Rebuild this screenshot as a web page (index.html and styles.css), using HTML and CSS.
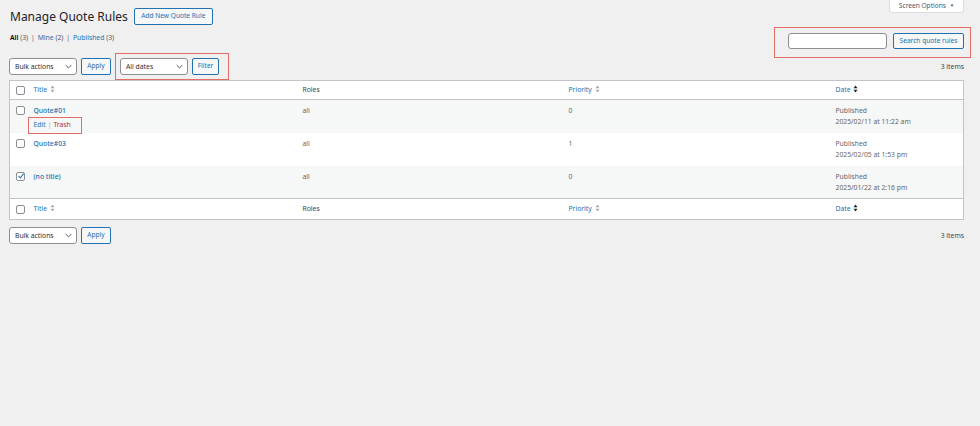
FILE: index.html
```html
<!DOCTYPE html>
<html lang="en">
<head>
<meta charset="utf-8">
<title>Manage Quote Rules</title>
<link rel="stylesheet" href="styles.css">
</head>
<body>
<div class="wrap">
  <div class="page-head">
    <div class="title-group">
      <h1 class="page-title">Manage Quote Rules</h1>
      <a class="btn btn-outline" href="#">Add New Quote Rule</a>
    </div>
    <button class="screen-options" type="button">Screen Options <span class="caret">&#9660;</span></button>
  </div>

  <div class="subnav">
    <ul class="subsubsub">
      <li><a class="current" href="#">All <span class="count">(3)</span></a> |</li>
      <li><a href="#">Mine <span class="count">(2)</span></a> |</li>
      <li><a href="#">Published <span class="count">(3)</span></a></li>
    </ul>
    <div class="search-box annotated">
      <input class="search-input" type="search" aria-label="Search">
      <button class="btn" type="button">Search quote rules</button>
    </div>
  </div>

  <div class="tablenav">
    <div class="select">Bulk actions <svg class="chev" viewBox="0 0 10 6"><path d="M1 1l4 4 4-4" fill="none" stroke="#50575e" stroke-width="1.4"/></svg></div>
    <button class="btn" type="button">Apply</button>
    <div class="filters annotated">
      <div class="select select-dates">All dates <svg class="chev" viewBox="0 0 10 6"><path d="M1 1l4 4 4-4" fill="none" stroke="#50575e" stroke-width="1.4"/></svg></div>
      <button class="btn" type="button">Filter</button>
    </div>
    <span class="items">3 items</span>
  </div>

  <table class="list">
    <colgroup>
      <col class="c-cb"><col class="c-title"><col class="c-roles"><col class="c-prio"><col>
    </colgroup>
    <thead>
      <tr class="head">
        <th class="cb"><span class="box"></span></th>
        <th><a href="#">Title</a> <svg class="sort" viewBox="0 0 6 10"><path d="M3 0.5L5.5 4H0.5z M3 9.5L5.5 6H0.5z" fill="#a7aaad"/></svg></th>
        <th class="plain">Roles</th>
        <th><a href="#">Priority</a> <svg class="sort" viewBox="0 0 6 10"><path d="M3 0.5L5.5 4H0.5z M3 9.5L5.5 6H0.5z" fill="#a7aaad"/></svg></th>
        <th><a href="#">Date</a> <svg class="sort" viewBox="0 0 6 10"><path d="M3 0.5L5.5 4H0.5z M3 9.5L5.5 6H0.5z" fill="#1d2327"/></svg></th>
      </tr>
    </thead>
    <tbody>
      <tr class="alt">
        <td class="cb"><span class="box"></span></td>
        <td><a class="row-title" href="#">Quote#01</a>
          <div class="row-actions annotated"><a href="#">Edit</a> <span class="sep">|</span> <a class="trash" href="#">Trash</a></div></td>
        <td>all</td>
        <td>0</td>
        <td>Published<br><span class="dt">2025/02/11 at 11:22 am</span></td>
      </tr>
      <tr>
        <td class="cb"><span class="box"></span></td>
        <td><a class="row-title" href="#">Quote#03</a></td>
        <td>all</td>
        <td>1</td>
        <td>Published<br><span class="dt">2025/02/05 at 1:53 pm</span></td>
      </tr>
      <tr class="alt">
        <td class="cb"><span class="box checked"><svg viewBox="0 0 10 10"><path d="M2 5.2l2.2 2.3L8.3 2" fill="none" stroke="#2271b1" stroke-width="1.4"/></svg></span></td>
        <td><a class="row-title" href="#">(no title)</a></td>
        <td>all</td>
        <td>0</td>
        <td>Published<br><span class="dt">2025/01/22 at 2:16 pm</span></td>
      </tr>
    </tbody>
    <tfoot>
      <tr class="foot">
        <th class="cb"><span class="box"></span></th>
        <th><a href="#">Title</a> <svg class="sort" viewBox="0 0 6 10"><path d="M3 0.5L5.5 4H0.5z M3 9.5L5.5 6H0.5z" fill="#a7aaad"/></svg></th>
        <th class="plain">Roles</th>
        <th><a href="#">Priority</a> <svg class="sort" viewBox="0 0 6 10"><path d="M3 0.5L5.5 4H0.5z M3 9.5L5.5 6H0.5z" fill="#a7aaad"/></svg></th>
        <th><a href="#">Date</a> <svg class="sort" viewBox="0 0 6 10"><path d="M3 0.5L5.5 4H0.5z M3 9.5L5.5 6H0.5z" fill="#1d2327"/></svg></th>
      </tr>
    </tfoot>
  </table>

  <div class="tablenav bottom">
    <div class="select">Bulk actions <svg class="chev" viewBox="0 0 10 6"><path d="M1 1l4 4 4-4" fill="none" stroke="#50575e" stroke-width="1.4"/></svg></div>
    <button class="btn" type="button">Apply</button>
    <span class="items">3 items</span>
  </div>
</div>
</body>
</html>
```
FILE: styles.css
```css
* { box-sizing: border-box; }
html, body { margin: 0; padding: 0; }
body {
  background: #f0f0f1;
  color: #3c434a;
  font-family: "Segoe UI", "Noto Sans", "Open Sans", sans-serif;
  font-size: 6.8px;
  line-height: 10px;
  height: 426px;
}
a { color: #2271b1; text-decoration: none; }
.wrap { padding: 0 16px 0 9px; }

.page-head { display: flex; justify-content: space-between; align-items: flex-start; height: 25px; }
.title-group { display: flex; align-items: center; gap: 6px; padding-top: 8px; padding-left: 1px; }
.page-title { margin: 0; font-size: 12px; line-height: 17px; font-weight: 400; color: #1d2327; }
.btn {
  display: inline-flex; align-items: center; justify-content: center;
  height: 17px; padding: 0 6px;
  border: 1px solid #2271b1; border-radius: 2px;
  background: #f6f7f7; color: #2271b1;
  font: inherit; font-size: 6.6px; line-height: 1;
}
.btn-outline { height: 17px; width: 79px; padding: 0; }
.screen-options {
  width: 75px; height: 13px; padding: 0;
  background: #fff; border: 1px solid #dcdcde; border-top: 0;
  border-radius: 0 0 3px 3px;
  font: inherit; font-size: 6.6px; color: #50575e; line-height: 1;
}
.caret { font-size: 4.5px; margin-left: 2px; vertical-align: 1px; }

.subnav { display: flex; justify-content: space-between; align-items: flex-start; margin-top: 8px; height: 16px; }
.subsubsub { display: flex; gap: 3px; list-style: none; margin: 0; padding: 0 0 0 1px; color: #646970; line-height: 10px; }
.subsubsub li { white-space: nowrap; }
.subsubsub a { margin-right: 1px; }
.subsubsub a.current { color: #000; font-weight: 600; }
.subsubsub .count { color: #50575e; font-weight: 400; }
.search-box { display: flex; gap: 6px; position: relative; }
.search-input {
  width: 99px; height: 16px; margin: 0; padding: 0 4px;
  border: 1px solid #8c8f94; border-radius: 3px; background: #fff;
}
.search-box .btn { width: 71px; height: 16px; padding: 0; }

.annotated { position: relative; }
.annotated::after {
  content: ""; position: absolute; pointer-events: none;
  border: 1px solid #e26d66;
}
.search-box::after { top: -6px; left: -14px; right: -7px; bottom: -9px; }
.filters::after { top: -5px; left: -5px; right: -10px; bottom: -5px; }
.row-actions::after { top: -3px; left: -6px; right: -11px; bottom: -4px; }

.tablenav { display: flex; align-items: center; height: 17px; margin-top: 9px; gap: 4px; }
.tablenav.bottom { margin-top: 7px; }
.select {
  display: flex; align-items: center; justify-content: space-between;
  width: 68px; height: 17px; padding: 0 4px 0 5px;
  border: 1px solid #8c8f94; border-radius: 3px; background: #fff; color: #2c3338;
}
.chev { width: 7px; height: 5px; }
.tablenav .btn { width: 30px; padding: 0; }
.filters { display: flex; gap: 4px; margin-left: 5px; }
.select-dates { width: 68px; }
.filters .btn { width: 27px; }
.items { margin-left: auto; color: #3c434a; }

.list {
  width: 100%; margin-top: 5px;
  border-collapse: collapse; border: 1px solid #c3c4c7;
  background: #fff; table-layout: fixed;
}
.c-cb { width: 24px; }
.c-title { width: 269px; }
.c-roles { width: 266px; }
.c-prio { width: 267px; }
.list th, .list td { text-align: left; padding: 0; font-weight: 400; vertical-align: top; }
.list thead th { height: 19px; vertical-align: middle; border-bottom: 1px solid #c3c4c7; color: #3c434a; }
.list tfoot th { height: 21px; vertical-align: middle; border-top: 1px solid #c3c4c7; color: #3c434a; }
.list th.cb, .list td.cb { padding-left: 6px; }
.list tbody td { padding-top: 6px; height: 33px; color: #666666; }
.list tbody td.cb { padding-top: 6px; }
.list tbody tr.alt { background: #f6f7f7; }
.list tbody td .dt { line-height: 11px; display: inline-block; }
.box {
  display: block; width: 9px; height: 9px;
  border: 1px solid #8c8f94; border-radius: 2px; background: #fff;
}
.box svg { display: block; width: 8px; height: 8px; margin: -0.5px 0 0 -0.5px; }
.sort { width: 5px; height: 8px; vertical-align: -1px; margin-left: 1px; }
.row-title { font-weight: 500; }
.row-actions { display: flex; gap: 2px; width: max-content; margin-top: 4px; }
.row-actions .sep { color: #a7aaad; }
.row-actions .trash { color: #b32d2e; }
```
